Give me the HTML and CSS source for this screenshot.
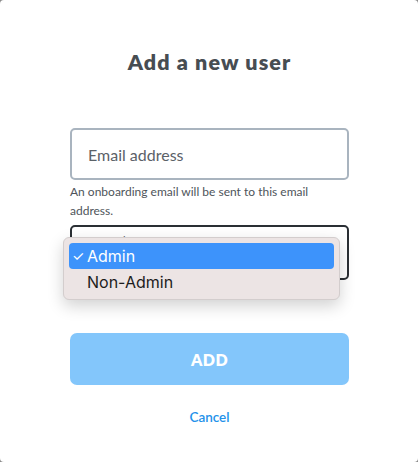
FILE: index.html
```html
<!DOCTYPE html>
<html>
<head>
<meta charset="utf-8">
<link rel="stylesheet" href="styles.css">
</head>
<body>
<div class="modal">
  <h1 class="title">Add a new user</h1>
  <form class="form">
    <div class="field">
      <div class="input">Email address</div>
      <p class="hint">An onboarding email will be sent to this email address.</p>
    </div>
    <div class="select-wrap">
      <div class="select">
        <span class="select-label">User role</span>
      </div>
      <ul class="menu">
        <li class="opt active"><span class="check">✓</span>Admin</li>
        <li class="opt">Non-Admin</li>
      </ul>
    </div>
    <div class="btn">ADD</div>
    <a class="cancel">Cancel</a>
  </form>
</div>
</body>
</html>
```
FILE: styles.css
```css
html, body {
  margin: 0;
  padding: 0;
  background: #8a8a8a;
}
.modal {
  width: 418px;
  height: 462px;
  background: #fff;
  border-radius: 4px;
  box-sizing: border-box;
  padding: 48px 69px 0 70px;
  font-family: "Lato", "Open Sans", sans-serif;
}
.title {
  margin: 0;
  text-align: center;
  font-size: 21.5px;
  line-height: 28px;
  font-weight: 800;
  color: #474d52;
  letter-spacing: 1.1px;
}
.form {
  margin: 52px 0 0;
  display: flex;
  flex-direction: column;
}
.input {
  height: 52px;
  box-sizing: border-box;
  border: 2px solid #a9b4bf;
  border-radius: 5px;
  padding: 0 16px;
  display: flex;
  align-items: center;
  font-size: 16px;
  color: #5b6168;
}
.hint {
  margin: 2px 0 0;
  font-size: 12px;
  line-height: 19px;
  color: #4e545a;
  padding-right: 4px;
}
.select-wrap {
  position: relative;
  margin-top: 5px;
}
.select {
  height: 55px;
  box-sizing: border-box;
  border: 2px solid #2a2f34;
  border-radius: 5px;
  padding: 2px 16px 0;
}
.select-label {
  font-size: 11px;
  line-height: 14px;
  color: #555b61;
}
.menu {
  position: absolute;
  left: -7px;
  top: 12px;
  width: 277px;
  height: 63px;
  box-sizing: border-box;
  margin: 0;
  padding: 5px 5px;
  list-style: none;
  background: #ece4e4;
  border: 1px solid #d3cdcd;
  border-radius: 6px;
  box-shadow: 0 6px 16px rgba(0,0,0,0.18);
  font-family: "Inter", "Liberation Sans", sans-serif;
}
.opt {
  height: 26px;
  line-height: 26px;
  padding-left: 18px;
  font-size: 16px;
  color: #1c1c1c;
  position: relative;
  border-radius: 4px;
}
.opt.active {
  background: #3d93fb;
  color: #fff;
}
.check {
  position: absolute;
  left: 3px;
  font-size: 14px;
}
.btn {
  margin-top: 53px;
  height: 52px;
  border-radius: 7px;
  background: #83c6fb;
  color: #fff;
  font-weight: 800;
  font-size: 16px;
  letter-spacing: 0.5px;
  display: flex;
  align-items: center;
  justify-content: center;
}
.cancel {
  margin-top: 24px;
  text-align: center;
  font-size: 13.5px;
  color: #2391ea;
  font-weight: 600;
}
```
